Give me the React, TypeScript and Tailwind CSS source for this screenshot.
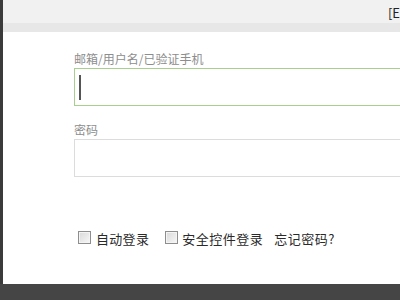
// Login-Formular (Ausschnitt) mit Kopfleiste und Checkbox-Zeile.

const FONT = { fontFamily: '"Microsoft YaHei", "Noto Sans CJK SC", "Noto Sans", sans-serif' }

function Box() {
  return (
    <span className="inline-block h-[13px] w-[13px] shrink-0 border border-[#8e8e8e] bg-gradient-to-br from-[#d9d9d9] to-[#f7f7f7] shadow-[inset_0_0_0_1px_#f4f4f4]" />
  )
}

export default function App() {
  return (
    <div className="flex h-[300px] w-[400px] flex-col overflow-hidden bg-white" style={FONT}>
      <div className="flex flex-1 flex-col border-l-[3px] border-[#3b3b3b]">
        <div className="flex h-[23px] justify-end bg-[#f0f1f0] pt-[5px] text-[13px] leading-[15px] whitespace-nowrap text-[#222]">
          [E
        </div>
        <div className="h-[9px] bg-[#e7e7e7]" />

        <div className="flex flex-col pl-[71px] pt-[19px]">
          <label className="text-[12px] leading-[15px] text-[#8d8d8d]">邮箱/用户名/已验证手机</label>
          <div className="mt-[2px] flex h-[38px] w-[360px] items-center border border-[#a6d08b] pl-[4px]">
            <span className="h-[25px] w-[2px] bg-[#555]" />
          </div>

          <label className="mt-[16px] text-[12px] leading-[15px] text-[#8d8d8d]">密码</label>
          <div className="mt-[2px] h-[38px] w-[360px] border border-[#dcdcdc]" />

          <div className="mt-[54px] flex items-center text-[13px] leading-[16px] whitespace-nowrap text-[#2a2a2a]">
            <span className="ml-[4px]"><Box /></span>
            <span className="ml-[5px] tracking-[0.3px]">自动登录</span>
            <span className="ml-[16px]"><Box /></span>
            <span className="ml-[4px] tracking-[0.5px]">安全控件登录</span>
            <span className="ml-[11px] tracking-[0.5px]">忘记密码?</span>
          </div>
        </div>
      </div>
      <div className="h-[16px] shrink-0 bg-[#454545]" />
    </div>
  )
}
